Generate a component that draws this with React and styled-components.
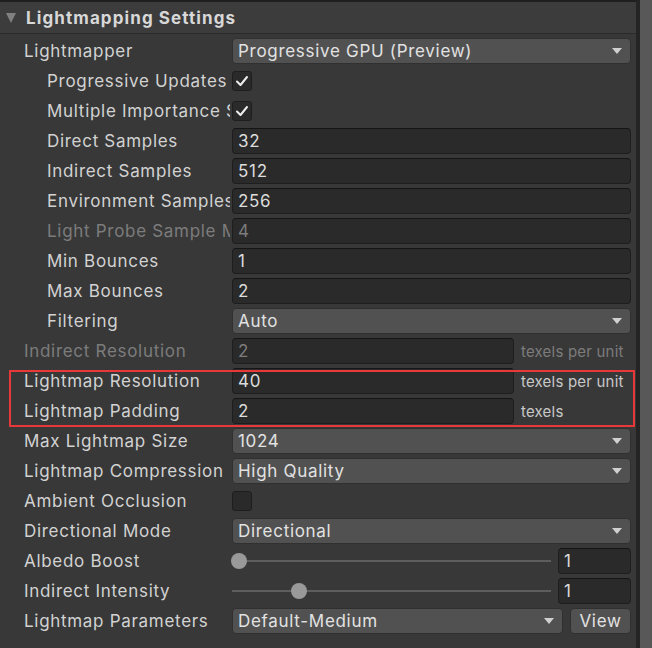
import React from 'react';
import styled, { createGlobalStyle } from 'styled-components';

const GlobalStyle = createGlobalStyle`
	html, body {
		margin: 0;
		padding: 0;
		background: #383838;
	}
	body {
		font-family: Inter, 'Noto Sans', sans-serif;
		color: #d2d2d2;
		letter-spacing: 0.7px;
	}
`;

const Page = styled.div`
	display: flex;
	width: 652px;
	height: 648px;
	overflow: hidden;
`;

const Main = styled.div`
	width: 636px;
	display: flex;
	flex-direction: column;
	border-top: 2px solid #1f1f1f;
	background: #383838;
`;

const Divider = styled.div`
	width: 4px;
	background: #242424;
`;

const Scrollbar = styled.div`
	flex: 1;
	background: #585858;
`;

const Header = styled.div`
	height: 31px;
	display: flex;
	align-items: center;
	gap: 10px;
	padding-left: 6px;
	background: #3c3c3c;
	border-bottom: 1px solid #2a2a2a;
	font-size: 17px;
	font-weight: 700;
	letter-spacing: 1.1px;
	color: #d8d8d8;
`;

const Caret = styled.span`
	width: 0;
	height: 0;
	border-left: 5.5px solid transparent;
	border-right: 5.5px solid transparent;
	border-top: 10px solid #808080;
`;

const List = styled.div`
	display: flex;
	flex-direction: column;
	padding-top: 2px;
`;

const Row = styled.div`
	display: grid;
	grid-template-columns: 232px 1fr;
	align-items: center;
	height: 30px;
	padding-right: 5px;
`;

const Label = styled.div`
	padding-left: ${p => (p.$indent ? 47 : 24)}px;
	width: ${p => (p.$indent ? 183 : 206)}px;
	overflow: hidden;
	white-space: nowrap;
	font-size: 17px;
	color: ${p => (p.$disabled ? '#7c7c7c' : '#d2d2d2')};
`;

const Controls = styled.div`
	display: flex;
	align-items: center;
	gap: 7px;
	min-width: 0;
`;

const Dropdown = styled.div`
	flex: 1;
	height: 24px;
	display: flex;
	align-items: center;
	justify-content: space-between;
	padding: 0 8px 0 5px;
	background: #515151;
	border: 1px solid #303030;
	border-radius: 4px;
	font-size: 17px;
	color: #e2e2e2;
	white-space: nowrap;
`;

const Arrow = styled.span`
	width: 0;
	height: 0;
	border-left: 5px solid transparent;
	border-right: 5px solid transparent;
	border-top: 6px solid #d0d0d0;
`;

const Field = styled.div`
	flex: ${p => (p.$width ? 'none' : 1)};
	width: ${p => (p.$width ? `${p.$width}px` : 'auto')};
	height: 24px;
	display: flex;
	align-items: center;
	padding-left: 5px;
	background: #2a2a2a;
	border: 1px solid #1e1e1e;
	border-top-color: #151515;
	border-radius: 4px;
	font-size: 17px;
	color: ${p => (p.$disabled ? '#7c7c7c' : '#dcdcdc')};
	box-sizing: content-box;
`;

const Unit = styled.span`
	width: 110px;
	font-size: 15px;
	letter-spacing: 0.2px;
	color: ${p => (p.$disabled ? '#7c7c7c' : '#c8c8c8')};
	white-space: nowrap;
`;

const Check = styled.div`
	width: 18px;
	height: 18px;
	display: flex;
	align-items: center;
	justify-content: center;
	background: #2a2a2a;
	border: 1px solid #1e1e1e;
	border-radius: 3px;
`;

const Slider = styled.div`
	position: relative;
	flex: 1;
	height: 16px;
	display: flex;
	align-items: center;
`;

const Track = styled.div`
	width: 100%;
	height: 2px;
	background: #5e5e5e;
`;

const Knob = styled.div`
	position: absolute;
	top: 0;
	width: 16px;
	height: 16px;
	border-radius: 50%;
	background: #999999;
	transform: translateX(-50%);
`;

const Button = styled.div`
	width: 59px;
	height: 24px;
	display: flex;
	align-items: center;
	justify-content: center;
	background: #515151;
	border: 1px solid #303030;
	border-radius: 4px;
	font-size: 17px;
	color: #e2e2e2;
`;

const Highlight = styled.div`
	position: relative;
`;

const RedBox = styled.div`
	position: absolute;
	top: 4px;
	left: 9px;
	right: 1px;
	bottom: -1px;
	border: 2px solid #e8383a;
	pointer-events: none;
`;

const CheckMark = () => (
	<svg width="14" height="12" viewBox="0 0 14 12">
		<polyline points="2,6.5 5.5,10 12,2" fill="none" stroke="#eeeeee" strokeWidth="2" strokeLinecap="round" strokeLinejoin="round" />
	</svg>
);

const Prop = ({ label, indent, disabled, children }) => (
	<Row>
		<Label $indent={indent} $disabled={disabled}>{label}</Label>
		<Controls>{children}</Controls>
	</Row>
);

const Select = ({ value }) => (
	<Dropdown>
		<span>{value}</span>
		<Arrow />
	</Dropdown>
);

const SliderField = ({ pos, value }) => (
	<>
		<Slider>
			<Track />
			<Knob style={{ left: `${pos}px` }} />
		</Slider>
		<Field $width={66}>{value}</Field>
	</>
);

export default function App() {
	return (
		<Page>
			<GlobalStyle />
			<Main>
				<Header>
					<Caret />
					Lightmapping Settings
				</Header>
				<List>
					<Prop label="Lightmapper"><Select value="Progressive GPU (Preview)" /></Prop>
					<Prop label="Progressive Updates" indent><Check><CheckMark /></Check></Prop>
					<Prop label="Multiple Importance Sampling" indent><Check><CheckMark /></Check></Prop>
					<Prop label="Direct Samples" indent><Field>32</Field></Prop>
					<Prop label="Indirect Samples" indent><Field>512</Field></Prop>
					<Prop label="Environment Samples" indent><Field>256</Field></Prop>
					<Prop label="Light Probe Sample Multiplier" indent disabled><Field $disabled>4</Field></Prop>
					<Prop label="Min Bounces" indent><Field>1</Field></Prop>
					<Prop label="Max Bounces" indent><Field>2</Field></Prop>
					<Prop label="Filtering" indent><Select value="Auto" /></Prop>
					<Prop label="Indirect Resolution" disabled>
						<Field $disabled>2</Field>
						<Unit $disabled>texels per unit</Unit>
					</Prop>
					<Highlight>
						<Prop label="Lightmap Resolution">
							<Field>40</Field>
							<Unit>texels per unit</Unit>
						</Prop>
						<Prop label="Lightmap Padding">
							<Field>2</Field>
							<Unit>texels</Unit>
						</Prop>
						<RedBox />
					</Highlight>
					<Prop label="Max Lightmap Size"><Select value="1024" /></Prop>
					<Prop label="Lightmap Compression"><Select value="High Quality" /></Prop>
					<Prop label="Ambient Occlusion"><Check /></Prop>
					<Prop label="Directional Mode"><Select value="Directional" /></Prop>
					<Prop label="Albedo Boost"><SliderField pos={7} value="1" /></Prop>
					<Prop label="Indirect Intensity"><SliderField pos={67} value="1" /></Prop>
					<Prop label="Lightmap Parameters">
						<Select value="Default-Medium" />
						<Button>View</Button>
					</Prop>
				</List>
			</Main>
			<Divider />
			<Scrollbar />
		</Page>
	);
}
